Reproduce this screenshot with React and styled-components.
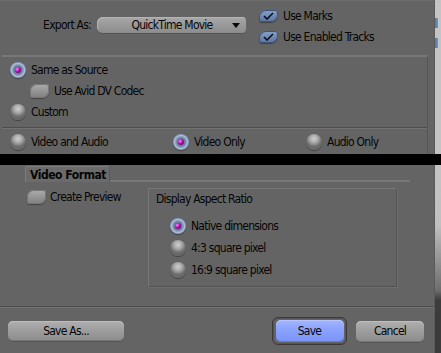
import React from 'react';
import styled, { createGlobalStyle, css } from 'styled-components';

const Global = createGlobalStyle`
  html, body { margin: 0; padding: 0; background: #646464; }
  body {
    font-family: "Liberation Sans Narrow", "DejaVu Sans Condensed", "Liberation Sans", sans-serif;
    font-size: 12px;
    letter-spacing: -0.75px;
    color: #050505;
  }
  * { box-sizing: border-box; }
`;

const Screen = styled.div`
  width: 441px;
  height: 353px;
  display: flex;
  flex-direction: column;
  overflow: hidden;
`;

const WindowRow = styled.div`
  display: flex;
  height: ${p => p.$h}px;
`;

const Panel = styled.div`
  width: 434px;
  background: #646464;
  display: flex;
  flex-direction: column;
  border-top: ${p => (p.$topEdge ? '1px solid #6c6c6c' : 'none')};
`;

const Strip = styled.div`
  flex: 1;
  background: ${p => p.$bg};
  border-left: 1px solid #5a5a5a;
  display: flex;
  flex-direction: column;
  gap: 10px;
  padding-top: 18px;
`;

const StripMark = styled.span`
  width: 3px;
  height: 10px;
  background: linear-gradient(to right, #4a78ab, #6d97c4);
`;

const BlackBand = styled.div`
  height: 11px;
  background: #000;
`;

/* ---------- header ---------- */
const Header = styled.div`
  height: 54px;
  display: flex;
  align-items: flex-start;
`;

const ExportGroup = styled.div`
  display: flex;
  align-items: center;
  gap: 6px;
  margin-top: 16px;
  height: 16px;
`;

const Label = styled.span`
  width: 91px;
  text-align: right;
  white-space: nowrap;
`;

const Dropdown = styled.div`
  width: 149px;
  height: 16px;
  border-radius: 6px 4px 4px 6px;
  background: linear-gradient(to bottom, #a8a8a8 0%, #999 50%, #8c8c8c 100%);
  box-shadow: inset 1px 1px 0 #b4b4b4, 0 1px 0 #555;
  display: flex;
  align-items: center;
  justify-content: center;
  position: relative;
  padding-left: 1px;
`;

const DropArrow = styled.svg`
  position: absolute;
  right: 6px;
  top: 6px;
`;

const Checks = styled.div`
  display: flex;
  flex-direction: column;
  gap: 9px;
  margin-left: 13px;
  margin-top: 9px;
`;

const OptionRow = styled.div`
  display: flex;
  align-items: center;
  gap: ${p => p.$gap ?? 5}px;
  height: ${p => p.$h ?? 16}px;
  margin-left: ${p => p.$indent ?? 0}px;
  white-space: nowrap;
`;

/* ---------- controls ---------- */
const BoxShape = styled.span`
  display: inline-flex;
  align-items: center;
  justify-content: center;
  flex: none;
  width: 19px;
  height: ${p => p.$h}px;
  border-radius: 7px 3px 7px 3px;
  ${p =>
    p.$checked
      ? css`
          background: linear-gradient(to bottom, #8aa2c8 0%, #6f88b2 55%, #5b739c 100%);
          box-shadow: inset 0 0 0 1px #3f5479, 0 1px 1px rgba(0, 0, 0, 0.35);
        `
      : css`
          background: linear-gradient(to bottom, #acacac 0%, #959595 50%, #7e7e7e 100%);
          box-shadow: inset 0 0 0 1px #777, 0 1px 1px rgba(0, 0, 0, 0.35);
        `}
`;

const Checkbox = ({ checked, h = 12 }) => (
  <BoxShape $checked={checked} $h={h}>
    {checked && (
      <svg width="11" height="8" viewBox="0 0 11 8">
        <path d="M1 4 L4 7 L10 1" fill="none" stroke="#0b0f1e" strokeWidth="1.6" />
      </svg>
    )}
  </BoxShape>
);

const RadioShape = styled.span`
  position: relative;
  flex: none;
  width: 16px;
  height: 16px;
  border-radius: 50%;
  box-shadow: 0 1px 1px rgba(0, 0, 0, 0.35);
  ${p =>
    p.$on
      ? css`
          background: radial-gradient(circle at 50% 50%, #5c6c88 0, #6b7c99 4px, #7f93b4 5px, #a9bddb 6.5px, #7c91b5 8px);
          &::after {
            content: '';
            position: absolute;
            left: 5px;
            top: 5px;
            width: 6px;
            height: 6px;
            border-radius: 50%;
            background: radial-gradient(circle at 35% 35%, #f39af3 0, #c81ec8 2px, #8a0a8a 3px);
          }
        `
      : css`
          background: radial-gradient(circle at 50% 30%, #d0d0d0 0, #a9a9a9 4px, #8a8a8a 6px, #6a6a6a 8px);
        `}
`;

const Radio = ({ on, children }) => (
  <OptionRow>
    <RadioShape $on={on} />
    <span>{children}</span>
  </OptionRow>
);

/* ---------- source box ---------- */
const SourceBox = styled.div`
  flex: 1;
  margin: 0 6px 0 2px;
  border-top: 2px solid #777;
  border-right: 1px solid #555;
  display: flex;
  flex-direction: column;
`;

const SourceOptions = styled.div`
  height: 70px;
  padding: 5px 0 0 8px;
  display: flex;
  flex-direction: column;
  gap: 5px;
`;

const Groove = styled.div`
  height: 2px;
  border-top: 1px solid #4e4e4e;
  border-bottom: 1px solid #727272;
`;

const TrackOptions = styled.div`
  flex: 1;
  display: grid;
  grid-template-columns: 163px 133px 1fr;
  align-items: center;
  padding-left: 8px;
`;

/* ---------- bottom window ---------- */
const TabRow = styled.div`
  height: 17px;
  display: flex;
  align-items: flex-end;
  padding-left: 25px;
`;

const Tab = styled.div`
  width: 85px;
  height: 16px;
  background: #6b6b6b;
  border-top: 1px solid #7d7d7d;
  border-left: 1px solid #7d7d7d;
  border-right: 1px solid #585858;
  border-radius: 2px 2px 0 0;
  font-weight: bold;
  letter-spacing: -0.45px;
  white-space: nowrap;
  padding-left: 4px;
  display: flex;
  align-items: center;
`;

const TabLine = styled.div`
  width: 300px;
  height: 2px;
  background: #777;
`;

const Content = styled.div`
  display: flex;
  padding-top: 6px;
`;

const LeftColumn = styled.div`
  width: 148px;
  padding: 1px 0 0 27px;
`;

const GroupBox = styled.div`
  width: 249px;
  height: 99px;
  border-top: 1px solid #777;
  border-left: 1px solid #777;
  border-right: 1px solid #535353;
  border-bottom: 1px solid #535353;
  box-shadow: 1px 1px 0 #6e6e6e;
  padding: 3px 0 0 7px;
  display: flex;
  flex-direction: column;
`;

const GroupTitle = styled.div`
  height: 14px;
  display: flex;
  align-items: center;
`;

const GroupOptions = styled.div`
  display: flex;
  flex-direction: column;
  gap: 6px;
  margin-top: 12px;
  padding-left: 14px;
`;

const Separator = styled.div`
  height: 2px;
  margin-top: 19px;
  border-top: 1px solid #4c4c4c;
  border-bottom: 1px solid #737373;
`;

const ButtonBar = styled.div`
  display: flex;
  align-items: center;
  height: 28px;
  margin-top: 9px;
  padding: 0 10px 0 8px;
`;

const Button = styled.button`
  font: inherit;
  letter-spacing: -0.75px;
  color: #050505;
  width: ${p => p.$w}px;
  height: ${p => p.$h}px;
  margin-left: ${p => p.$ml ?? 0}px;
  border: none;
  border-radius: 5px;
  padding: 0;
  background: ${p =>
    p.$primary
      ? 'linear-gradient(to bottom, #a3b5ff 0%, #8aa2ff 45%, #7a94f7 100%)'
      : 'linear-gradient(to bottom, #b0b0b0 0%, #9c9c9c 50%, #8c8c8c 100%)'};
  box-shadow: ${p =>
    p.$primary
      ? 'inset 0 1px 0 #b8c6ff, inset 0 -1px 0 #5f78d8'
      : 'inset 0 1px 0 #bdbdbd, inset 0 -1px 0 #777, 0 1px 0 #555'};
`;

const DefaultFrame = styled.div`
  margin-left: auto;
  width: 75px;
  height: 28px;
  border-radius: 6px;
  border: 1px solid #3a3a3a;
  box-shadow: inset 0 0 0 1px #555;
  display: flex;
  align-items: center;
  justify-content: center;
`;

export default function App() {
  return (
    <Screen>
      <Global />
      <WindowRow $h={154}>
        <Panel $topEdge>
          <Header>
            <ExportGroup>
              <Label>Export As:</Label>
              <Dropdown>
                <span>QuickTime Movie</span>
                <DropArrow width="8" height="5" viewBox="0 0 8 5">
                  <polygon points="0,0 8,0 4,5" fill="#0a0a0a" />
                </DropArrow>
              </Dropdown>
            </ExportGroup>
            <Checks>
              <OptionRow $h={12}>
                <Checkbox checked />
                <span>Use Marks</span>
              </OptionRow>
              <OptionRow $h={12}>
                <Checkbox checked />
                <span>Use Enabled Tracks</span>
              </OptionRow>
            </Checks>
          </Header>
          <SourceBox>
            <SourceOptions>
              <Radio on>Same as Source</Radio>
              <OptionRow $indent={20}>
                <Checkbox h={14} />
                <span>Use Avid DV Codec</span>
              </OptionRow>
              <Radio>Custom</Radio>
            </SourceOptions>
            <Groove />
            <TrackOptions>
              <Radio>Video and Audio</Radio>
              <Radio on>Video Only</Radio>
              <Radio>Audio Only</Radio>
            </TrackOptions>
          </SourceBox>
        </Panel>
        <Strip $bg="#c4c4c4">
          <StripMark />
          <StripMark />
        </Strip>
      </WindowRow>
      <BlackBand />
      <WindowRow $h={188}>
        <Panel>
          <TabRow>
            <Tab>Video Format</Tab>
            <TabLine />
          </TabRow>
          <Content>
            <LeftColumn>
              <OptionRow $gap={4}>
                <Checkbox h={14} />
                <span>Create Preview</span>
              </OptionRow>
            </LeftColumn>
            <GroupBox>
              <GroupTitle>Display Aspect Ratio</GroupTitle>
              <GroupOptions>
                <Radio on>Native dimensions</Radio>
                <Radio>4:3 square pixel</Radio>
                <Radio>16:9 square pixel</Radio>
              </GroupOptions>
            </GroupBox>
          </Content>
          <Separator />
          <ButtonBar>
            <Button $w={116} $h={20}>Save As...</Button>
            <DefaultFrame>
              <Button $primary $w={68} $h={22}>Save</Button>
            </DefaultFrame>
            <Button $w={68} $h={21} $ml={9}>Cancel</Button>
          </ButtonBar>
        </Panel>
        <Strip $bg="linear-gradient(to bottom, #c4c4c4 0px, #c0c0c0 60px, #6e6e6e 125px, #3c3c3c 135px, #3c3c3c 100%)" />
      </WindowRow>
    </Screen>
  );
}
